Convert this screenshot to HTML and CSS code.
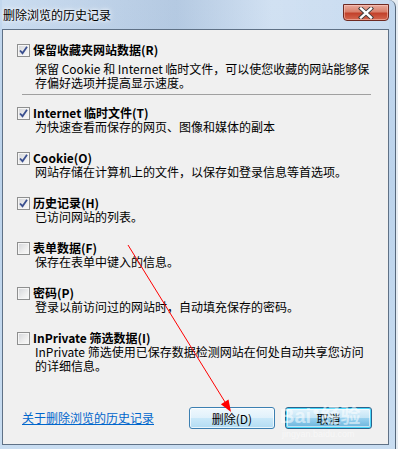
FILE: index.html
```html
<!DOCTYPE html>
<html lang="zh-CN">
<head>
  <meta charset="UTF-8" />
  <title>删除浏览的历史记录</title>
  <link rel="stylesheet" href="styles.css">
</head>
<body>
  <div class="window">
    <div class="titlebar">
      <span class="title">删除浏览的历史记录</span>
      <span class="close">
        <svg width="16" height="12" viewBox="0 0 16 12">
          <path d="M3 1.5 L13 10.5 M13 1.5 L3 10.5" stroke="#3b3b3b" stroke-width="4.2" stroke-linecap="square" fill="none"/>
          <path d="M3 1.5 L13 10.5 M13 1.5 L3 10.5" stroke="#fff" stroke-width="2.4" stroke-linecap="square" fill="none"/>
        </svg>
      </span>
    </div>

    <div class="client">
      <div class="item first">
        <div class="opt">
          <span class="check"><svg width="11" height="11" viewBox="0 0 11 11"><path d="M2 5.5 L4.5 8.2 L9 1.8" stroke="#3a4f8f" stroke-width="1.8" fill="none"/></svg></span>
          <b>保留收藏夹网站数据(R)</b>
        </div>
        <p class="desc">保留 Cookie 和 Internet 临时文件，可以使您收藏的网站能够保<br>存偏好选项并提高显示速度。</p>
      </div>

      <hr class="sep">

      <div class="item">
        <div class="opt">
          <span class="check"><svg width="11" height="11" viewBox="0 0 11 11"><path d="M2 5.5 L4.5 8.2 L9 1.8" stroke="#3a4f8f" stroke-width="1.8" fill="none"/></svg></span>
          <b>Internet 临时文件(T)</b>
        </div>
        <p class="desc">为快速查看而保存的网页、图像和媒体的副本</p>
      </div>

      <div class="item">
        <div class="opt">
          <span class="check"><svg width="11" height="11" viewBox="0 0 11 11"><path d="M2 5.5 L4.5 8.2 L9 1.8" stroke="#3a4f8f" stroke-width="1.8" fill="none"/></svg></span>
          <b>Cookie(O)</b>
        </div>
        <p class="desc">网站存储在计算机上的文件，以保存如登录信息等首选项。</p>
      </div>

      <div class="item">
        <div class="opt">
          <span class="check"><svg width="11" height="11" viewBox="0 0 11 11"><path d="M2 5.5 L4.5 8.2 L9 1.8" stroke="#3a4f8f" stroke-width="1.8" fill="none"/></svg></span>
          <b>历史记录(H)</b>
        </div>
        <p class="desc">已访问网站的列表。</p>
      </div>

      <div class="item">
        <div class="opt">
          <span class="check"></span>
          <b>表单数据(F)</b>
        </div>
        <p class="desc">保存在表单中键入的信息。</p>
      </div>

      <div class="item">
        <div class="opt">
          <span class="check"></span>
          <b>密码(P)</b>
        </div>
        <p class="desc">登录以前访问过的网站时，自动填充保存的密码。</p>
      </div>

      <div class="item">
        <div class="opt">
          <span class="check"></span>
          <b>InPrivate 筛选数据(I)</b>
        </div>
        <p class="desc">InPrivate 筛选使用已保存数据检测网站在何处自动共享您访问<br>的详细信息。</p>
      </div>

      <div class="footer">
        <a class="help" href="#">关于删除浏览的历史记录</a>
        <div class="buttons">
          <button class="btn">删除(D)</button>
          <button class="btn default">取消</button>
        </div>
      </div>
    </div>

    <svg class="arrow" width="398" height="449" viewBox="0 0 398 449">
      <line x1="128" y1="245" x2="225" y2="402" stroke="#ff0000" stroke-width="1"/>
      <polygon points="231,412 220.9,404.2 228.5,399.4" fill="#ff0000"/>
    </svg>

    <div class="watermark">
      <span class="wm-logo">Bai<span class="paw">&#9679;</span>经验</span>
      <span class="wm-url">jingyan.baidu.com</span>
    </div>
  </div>
</body>
</html>
```

FILE: styles.css
```css
body {
  margin: 0;
  width: 398px;
  height: 449px;
  overflow: hidden;
  background-color: #e6ecf2;
  font-family: "Noto Sans CJK SC", sans-serif;
  font-size: 12px;
  color: #000;
}
.window {
  position: relative;
  box-sizing: border-box;
  width: 396px;
  height: 449px;
  padding: 0 6px 4px 2px;
  border-right: 1px solid #56687c;
  border-top-right-radius: 7px;
  background: linear-gradient(180deg, #c2d7ee 0%, #bcd3eb 40%, #c9ddf1 100%);
  display: flex;
  flex-direction: column;
}
.titlebar {
  height: 29px;
  display: flex;
  justify-content: space-between;
  align-items: flex-start;
  background: linear-gradient(90deg, rgba(255,255,255,0.15) 0%, rgba(120,140,170,0.18) 45%, rgba(255,255,255,0.25) 70%, rgba(255,255,255,0.1) 100%);
}
.title {
  line-height: 29px;
  padding-left: 1px;
  text-shadow: 0 0 6px #fff, 0 0 3px #fff;
}
.close {
  margin-top: 4px;
  width: 46px;
  height: 17px;
  box-sizing: border-box;
  border: 1px solid #6e2a22;
  border-radius: 0 0 4px 4px;
  background: linear-gradient(180deg, #e9aa9c 0%, #d9806b 45%, #c2412b 55%, #d3674f 100%);
  box-shadow: inset 0 0 0 1px rgba(255,210,200,0.5);
  display: flex;
  justify-content: center;
  align-items: center;
}
.client {
  flex: 1;
  box-sizing: border-box;
  border: 1px solid #5f7186;
  background-color: #f0f0f0;
  padding: 13px 14px 15px 14px;
  display: flex;
  flex-direction: column;
}
.item {
  margin-bottom: 17px;
}
.item.first {
  margin-bottom: 0;
}
.opt {
  display: flex;
  align-items: center;
  height: 14px;
  gap: 3px;
}
.opt b {
  line-height: 14px;
  font-weight: bold;
}
.check {
  box-sizing: border-box;
  width: 13px;
  height: 13px;
  flex: none;
  border: 1px solid #8e8f8f;
  background: linear-gradient(135deg, #d2d4d8 0%, #eeeeee 60%, #fafafa 100%);
  box-shadow: inset 0 0 0 1px #f6f6f6;
  display: flex;
  justify-content: center;
  align-items: center;
}
.desc {
  margin: 0;
  padding-left: 18px;
  line-height: 14px;
}
.first .desc {
  margin-top: 5px;
}
.sep {
  margin: 4px 3px 11px 5px;
  border: none;
  border-top: 1px solid #a0a0a0;
  height: 0;
}
.footer {
  margin-top: auto;
  display: flex;
  justify-content: space-between;
  align-items: center;
}
.help {
  margin-left: 5px;
  color: #0066cc;
  text-decoration: underline;
  line-height: 14px;
}
.buttons {
  display: flex;
  gap: 10px;
  margin-right: 2px;
}
.btn {
  width: 86px;
  height: 22px;
  padding: 0;
  border: 1px solid #3c7fb1;
  border-radius: 3px;
  font-family: inherit;
  font-size: 12px;
  color: #000;
  background: linear-gradient(180deg, #f0f8fd 0%, #e0f1fb 48%, #c9e8f9 52%, #b2dcf3 100%);
  box-shadow: inset 0 0 0 1px rgba(255,255,255,0.7);
}
.btn.default {
  width: 87px;
  border-color: #2c628b;
  background: linear-gradient(180deg, #e5f4fc 0%, #c4e5f6 48%, #98d1ef 52%, #68b3db 100%);
  box-shadow: inset 0 0 0 1px #48d8fb, inset 0 0 0 2px rgba(255,255,255,0.6);
}
.arrow {
  position: absolute;
  top: 0;
  left: 0;
  pointer-events: none;
}
.watermark {
  position: absolute;
  left: 280px;
  top: 398px;
  display: flex;
  flex-direction: column;
  align-items: flex-start;
  pointer-events: none;
  color: rgba(255,255,255,0.55);
}
.wm-logo {
  font-family: "Liberation Sans", "Noto Sans CJK SC", sans-serif;
  font-size: 20px;
  font-weight: bold;
  line-height: 26px;
}
.paw {
  font-size: 12px;
  vertical-align: 8px;
  margin: 0 1px;
}
.wm-url {
  font-family: "Liberation Sans", sans-serif;
  font-size: 9px;
  line-height: 10px;
  margin-left: 2px;
  color: rgba(255,255,255,0.5);
}
```
